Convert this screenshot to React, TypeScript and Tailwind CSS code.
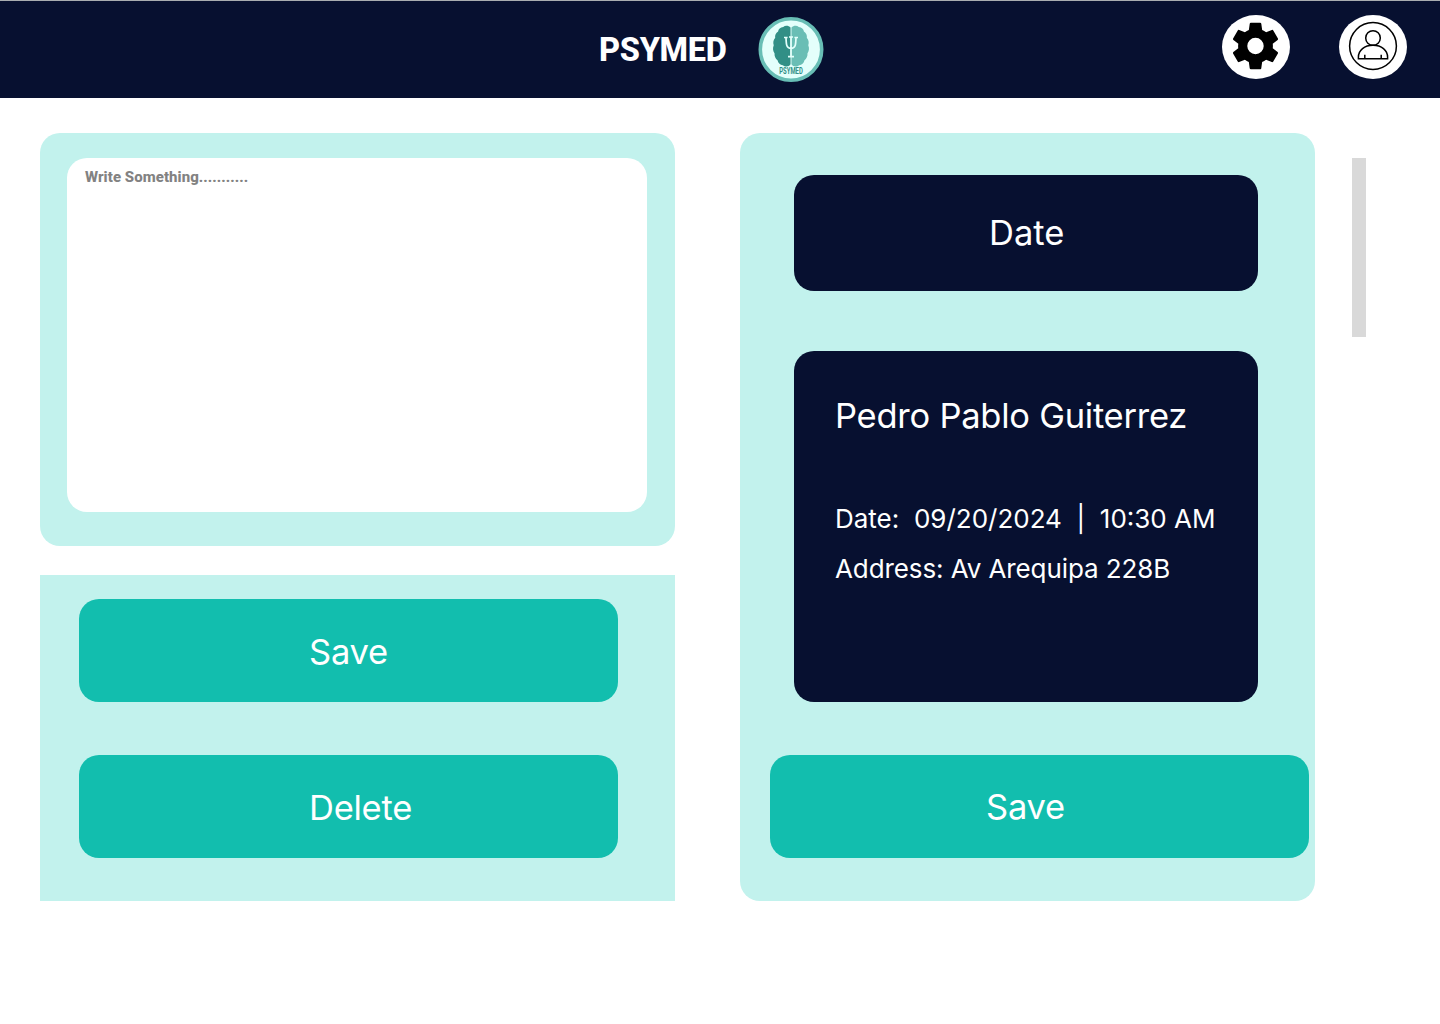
import React from "react";

const teal = "flex h-[103px] w-[539px] items-center rounded-[20px] bg-[#12beae] text-[34.5px] tracking-[-0.25px] leading-[42px] text-white";

function Logo() {
  return (
    <svg className="ml-[31px] mt-[15px] h-[66px] w-[66px] shrink-0" viewBox="0 0 66 66">
      <circle cx="33" cy="33.5" r="30.7" fill="#e4fffb" stroke="#68beb5" strokeWidth="3.6" />
      <g transform="translate(1 0.9) scale(0.97)">
        <path
          d="M32.500 11c-1.800-2-5.400-2.600-7.500-.6-3 .2-5 2.200-5.300 4.700-2.300 1.500-3.500 4-3 6.500-1.900 2.200-2.500 5-1.500 7.700-1.300 3-.8 6 .8 8.200-.2 3.200 1 5.700 3.100 7.100.6 3.200 2.900 5 5.400 5.200 2.500 2 6.300 1.900 8-.9z"
          fill="#318f86"
        />
        <path
          d="M33.500 11c1.800-2 5.400-2.600 7.500-.6 3 .2 5 2.200 5.300 4.700 2.300 1.500 3.500 4 3 6.500 1.900 2.200 2.500 5 1.500 7.700 1.300 3 .8 6-.8 8.200.2 3.200-1 5.700-3.100 7.100-.6 3.200-2.900 5-5.400 5.200-2.500 2-6.300 1.900-8-.9z"
          fill="#6abeb5"
        />
      </g>
      <path
        d="M26 21.500h3.600M36.400 21.500H40M28 21.500c.2 6.800.3 10.800 5 10.800s4.800-4 5-10.800M33 20.500v20M31 21h4M30 40.700h6"
        fill="none"
        stroke="#e4fffb"
        strokeWidth="1.7"
      />
      <text
        x="33"
        y="58"
        textAnchor="middle"
        textLength="23.500"
        lengthAdjust="spacingAndGlyphs"
        fontFamily="Roboto"
        fontWeight="700"
        fontSize="8.200"
        fill="#318f86"
      >
        PSYMED
      </text>
    </svg>
  );
}

function SettingsIcon() {
  return (
    <svg className="h-[58px] w-[58px] shrink-0 -translate-x-[0.5px] -translate-y-px" viewBox="0 0 24 24">
      <path d="M19.140 12.940c.04-.3.06-.61.06-.94 0-.32-.02-.64-.07-.94l2.030-1.580c.18-.14.23-.41.12-.61l-1.920-3.320c-.12-.22-.37-.29-.59-.22l-2.390.96c-.5-.38-1.030-.7-1.620-.94l-.36-2.540c-.04-.24-.24-.41-.48-.41h-3.840c-.24 0-.43.17-.47.41l-.36 2.540c-.59.24-1.130.57-1.620.94l-2.390-.96c-.22-.08-.47 0-.59.22L2.740 8.870c-.12.21-.08.47.12.61l2.030 1.580c-.05.3-.09.63-.09.94s.02.64.07.94l-2.030 1.580c-.18.14-.23.41-.12.61l1.920 3.320c.12.22.37.29.59.22l2.390-.96c.5.38 1.030.7 1.620.94l.36 2.540c.05.24.24.41.48.41h3.840c.24 0 .44-.17.47-.41l.36-2.540c.59-.24 1.130-.56 1.620-.94l2.390.96c.22.08.47 0 .59-.22l1.920-3.320c.12-.22.07-.47-.12-.61l-2.010-1.580zM12 15.400a3.400 3.400 0 1 1 0-6.800 3.400 3.400 0 0 1 0 6.800z" />
    </svg>
  );
}

function ProfileIcon() {
  return (
    <svg className="h-[50px] w-[50px] shrink-0 -translate-y-px" viewBox="0 0 50 50" fill="none" stroke="#000" strokeWidth="1.5">
      <circle cx="25" cy="25" r="23.400" />
      <circle cx="25" cy="17" r="7.300" />
      <path d="M10.400 37.700v-1.500C10.400 29 16.500 24.300 25 24.300s14.600 4.700 14.600 11.900v1.500zM16.800 37.500v-3.800M33.200 37.500v-3.800" />
    </svg>
  );
}

export default function App() {
  return (
    <div className="h-[1024px] w-[1440px] overflow-hidden bg-white font-['Inter',sans-serif]">
      <header className="flex h-[98px] items-start border-t border-[#a9adb0] bg-[#071030]">
        <h1 className="ml-[599px] mt-[30px] w-[128px] whitespace-nowrap font-['Roboto',sans-serif] text-[32.5px] font-extrabold leading-[39px] tracking-[-0.3px] text-white">
          PSYMED
        </h1>
        <Logo />
        <button className="ml-[398px] mt-[14px] flex h-16 w-[68px] items-center justify-center rounded-[50%] bg-white">
          <SettingsIcon />
        </button>
        <button className="ml-[49px] mt-[14px] flex h-16 w-[68px] items-center justify-center rounded-[50%] bg-white">
          <ProfileIcon />
        </button>
      </header>
      <main className="flex items-start pl-10 pt-[35px]">
        <div className="w-[635px]">
          <section className="h-[413px] rounded-[20px] bg-[#c2f2ed] pl-[27px] pt-[25px]">
            <div className="h-[354px] w-[580px] rounded-[20px] bg-white pl-[18px] pt-[10px] font-['Roboto',sans-serif] text-[15px] font-extrabold leading-[18px] tracking-[0.05px] text-[#828282]">
              Write Something...........
            </div>
          </section>
          <section className="mt-[29px] flex h-[326px] flex-col gap-[53px] bg-[#c2f2ed] pl-[39px] pt-6">
            <button className={teal + " pl-[230px] pt-[2px]"}>Save</button>
            <button className={teal + " pl-[230px] pt-[2px]"}>Delete</button>
          </section>
        </div>
        <section className="ml-[65px] h-[768px] w-[575px] rounded-[20px] bg-[#c2f2ed] pt-[42px] text-white">
          <button className="ml-[54px] flex h-[116px] w-[464px] items-center rounded-[20px] bg-[#071030] pl-[195px] text-[34.5px] leading-[42px]">
            Date
          </button>
          <article className="ml-[54px] mt-[60px] h-[351px] w-[464px] whitespace-nowrap rounded-[20px] bg-[#071030] pl-[41px] pt-11">
            <h2 className="text-[34.5px] leading-[42px] tracking-[-0.25px]">Pedro Pablo Guiterrez</h2>
            <div className="mt-[57px] whitespace-pre text-[26px] leading-[50px]">
              <p>{"Date:  09/20/2024  |  10:30 AM"}</p>
              <p className="tracking-[-0.1px]">Address: Av Arequipa 228B</p>
            </div>
          </article>
          <button className={teal + " ml-[30px] mt-[53px] pl-[216px]"}>Save</button>
        </section>
        <div className="ml-[37px] mt-[25px] h-[179px] w-[14px] bg-[#d9d9d9]" />
      </main>
    </div>
  );
}
